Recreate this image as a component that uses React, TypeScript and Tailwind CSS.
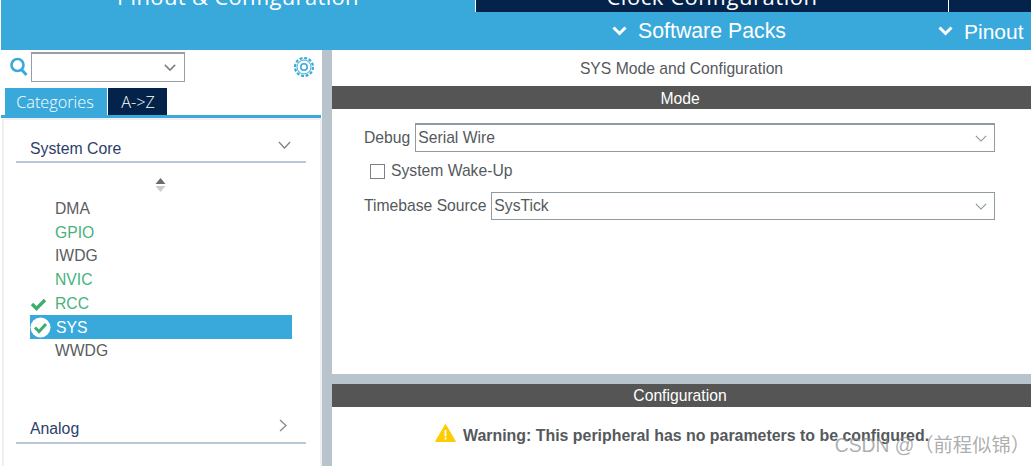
import React from "react";

const Chev = ({ c = "#808080", w = 14, h = 8, s = 1.5 }: { c?: string; w?: number; h?: number; s?: number }) => (
  <svg width={w} height={h} viewBox="0 0 14 8" fill="none" className="shrink-0" preserveAspectRatio="none">
    <path d="M1 1 L7 7 L13 1" stroke={c} strokeWidth={s} />
  </svg>
);

const Sel = ({ text, cls }: { text: string; cls: string }) => (
  <div className={`flex items-center justify-between border border-[#8f9aa1] bg-white pl-[2px] pr-[7px] text-[#55595c] ${cls}`}>
    <span>{text}</span>
    <Chev c="#8a8f92" w={12} h={7} s={1.2} />
  </div>
);

const Item = ({ t, green, mark }: { t: string; green?: boolean; mark?: boolean }) => (
  <div className={`flex h-[23.7px] items-center pl-[25px] text-[15.7px] ${green ? "text-[#47b27a]" : "text-[#5a5c5e]"}`}>
    <div className="flex w-0 -translate-x-[25px]">
      {mark && (
        <svg width="17" height="14" viewBox="0 0 17 14" className="shrink-0">
          <path d="M2 7 L6.5 11.5 L15 3" stroke="#3fae6d" strokeWidth="3.4" fill="none" />
        </svg>
      )}
    </div>
    {t}
  </div>
);

const Head = ({ t, cls }: { t: string; cls: string }) => (
  <div className={`flex h-[23px] items-center justify-center pr-[3px] text-[15.7px] text-white bg-[#545554] ${cls}`}>{t}</div>
);

export default function App() {
  return (
    <div className="flex h-[466px] w-[1031px] flex-col overflow-hidden bg-white font-['Liberation_Sans',sans-serif]">
      <div className="h-[50px] shrink-0 overflow-hidden border-l border-white bg-[#39a9dc]">
        <div className="flex h-[12px] overflow-hidden whitespace-nowrap">
          <div className="flex h-[12px] w-[474px] items-end justify-center text-[22px] leading-[22px] tracking-[0.33px] text-white font-['Open_Sans',sans-serif]">
            <span className="mb-[5px]">Pinout &amp; Configuration</span>
          </div>
          <div className="flex h-[12px] w-[474px] items-end justify-center border-x border-white bg-[#03234b] text-[22px] leading-[22px] tracking-[0.55px] text-white font-['Open_Sans',sans-serif]">
            <span className="mb-[5px]">Clock Configuration</span>
          </div>
          <div className="h-[12px] flex-1 bg-[#03234b]" />
        </div>
        <div className="flex h-[38px] items-center whitespace-nowrap pt-[2px] text-white">
          <div className="ml-[611px] flex w-[175px] shrink-0 items-center gap-[11px] text-[21.3px]">
            <svg width="15" height="10" viewBox="0 0 15 10" className="-mt-[2px] shrink-0" fill="none">
              <path d="M1.5 1.5 L7.5 7.5 L13.5 1.5" stroke="#fff" strokeWidth="3" />
            </svg>
            <span>Software Packs</span>
          </div>
          <div className="ml-[151px] flex items-center gap-[11px] text-[21px]">
            <svg width="15" height="10" viewBox="0 0 15 10" className="-mt-[2px] shrink-0" fill="none">
              <path d="M1.5 1.5 L7.5 7.5 L13.5 1.5" stroke="#fff" strokeWidth="3" />
            </svg>
            <span>Pinout</span>
          </div>
        </div>
      </div>

      <div className="flex min-h-0 flex-1">
        <div className="flex w-[322px] shrink-0 flex-col bg-white">
          <div className="flex h-[38px] shrink-0 items-start pl-[10px] pt-[2px]">
            <svg width="18" height="20" viewBox="0 0 18 20" className="mt-[5px] shrink-0" fill="none">
              <circle cx="7.5" cy="8" r="6" stroke="#39a9dc" strokeWidth="2.6" />
              <path d="M11.5 12.5 L16.5 18" stroke="#39a9dc" strokeWidth="3" />
            </svg>
            <div className="ml-[3px] flex h-[30px] w-[154px] items-center justify-end border border-t-2 border-[#989ea3] pr-[8px]">
              <Chev c="#7c7f82" w={12} h={7} s={1.8} />
            </div>
            <svg width="22" height="22" viewBox="0 0 22 22" className="ml-[108px] mt-[4px] shrink-0" fill="none">
              <circle cx="11" cy="11" r="9" stroke="#39a9dc" strokeWidth="2.2" strokeDasharray="3 1.7" />
              <circle cx="11" cy="11" r="7" stroke="#39a9dc" strokeWidth="1" />
              <circle cx="11" cy="11" r="3.2" stroke="#39a9dc" strokeWidth="1.6" />
            </svg>
          </div>
          <div className="ml-[5px] flex h-[27px] shrink-0 text-[16.3px] font-light text-white font-['Open_Sans',sans-serif]">
            <div className="flex w-[102px] items-center justify-center bg-[#39a9dc] pr-[2px] pt-[1px]">Categories</div>
            <div className="ml-[1px] flex w-[59px] items-center justify-center bg-[#03234b] pl-[1px] pt-[1px]">A-&gt;Z</div>
          </div>
          <div className="ml-[1px] h-[3px] w-[320px] shrink-0 bg-[#39a9dc]" />
          <div className="ml-[2px] flex min-h-0 flex-1 flex-col border-x-[2px] border-t-[2px] border-[#f0f0f0] pl-[12px] pr-[14px]">
            <div className="mt-[14px] flex h-[29px] shrink-0 items-start justify-between border-b-2 border-[#b9c7d6] pl-[14px] pr-[15px] text-[15.8px] leading-[29px] text-[#2c3e6b]">
              <span>System Core</span>
              <div className="pt-[7px]">
                <Chev c="#7c7f82" w={13} h={8} s={1.3} />
              </div>
            </div>
            <div className="flex h-[34px] shrink-0 items-center justify-center pt-[11px]">
              <svg width="11" height="14" viewBox="0 0 11 14" className="-ml-[1px] -mt-[2px]">
                <path d="M5.5 0 L10.5 6 H.5 Z" fill="#6a6d70" />
                <path d="M5.5 14 L10.5 8 H.5 Z" fill="#c9cccf" />
              </svg>
            </div>
            <div className="ml-[14px] w-[262px] shrink-0">
              <Item t="DMA" />
              <Item t="GPIO" green />
              <Item t="IWDG" />
              <Item t="NVIC" green />
              <Item t="RCC" green mark />
              <div className="flex h-[23.7px] items-center bg-[#39a9dc] pl-[26px] text-[15.7px] text-white">
                <div className="flex w-0 -translate-x-[26px]">
                  <svg width="21" height="21" viewBox="0 0 21 21" className="shrink-0">
                    <circle cx="10.5" cy="10.5" r="10" fill="#fff" />
                    <path d="M5 10.5 L9 14.5 L16 7" stroke="#3fae6d" strokeWidth="3" fill="none" />
                  </svg>
                </div>
                SYS
              </div>
              <Item t="WWDG" />
            </div>
            <div className="mt-[51px] flex h-[30px] shrink-0 items-start justify-between border-b-2 border-[#b9c7d6] pl-[14px] pr-[19px] text-[15.8px] leading-[29px] text-[#2c3e6b]">
              <span>Analog</span>
              <svg width="8" height="13" viewBox="0 0 8 13" className="mt-[5px]" fill="none">
                <path d="M1 1 L7 6.5 L1 12" stroke="#8a8d90" strokeWidth="1.4" />
              </svg>
            </div>
          </div>
        </div>

        <div className="w-[10px] shrink-0 bg-[#b8c4cc]" />

        <div className="flex min-w-0 flex-1 flex-col bg-[#b8c4cc]">
          <div className="flex h-[324px] shrink-0 flex-col bg-white">
            <div className="flex h-[36px] shrink-0 items-center justify-center pt-[1px] text-[15.7px] text-[#55595c]">SYS Mode and Configuration</div>
            <Head t="Mode" cls="pt-[2px]" />
            <div className="flex flex-col pl-[32px] pr-[36px] pt-[14px] text-[15.7px] text-[#55595c]">
              <div className="flex h-[29px] items-center gap-[5px]">
                <span>Debug</span>
                <Sel text="Serial Wire" cls="h-[29px] flex-1 border-t-2" />
              </div>
              <div className="mt-[5px] flex h-[28px] items-center pl-[6px]">
                <div className="h-[15px] w-[15px] border border-[#7d8184] bg-white" />
                <span className="ml-[6px]">System Wake-Up</span>
              </div>
              <div className="mt-[7px] flex h-[28px] items-center gap-[5px]">
                <span>Timebase Source</span>
                <Sel text="SysTick" cls="h-[28px] flex-1" />
              </div>
            </div>
          </div>
          <div className="mt-[10px] flex min-h-0 flex-1 flex-col bg-white">
            <Head t="Configuration" cls="pt-0" />
            <div className="relative flex flex-1 items-start pl-[103px] pt-[17px]">
              <svg width="21" height="18" viewBox="0 0 21 18" className="shrink-0">
                <path d="M10.5 0.5 L20.5 17.5 H.5 Z" fill="#ffcc00" stroke="#ffcc00" strokeLinejoin="round" />
                <rect x="9.6" y="6" width="1.8" height="6.5" fill="#fff" />
                <rect x="9.6" y="13.5" width="1.8" height="2" fill="#fff" />
              </svg>
              <span className="ml-[7px] text-[15.92px] font-bold leading-[24px] whitespace-nowrap text-[#55595c]">Warning: This peripheral has no parameters to be configured.</span>
              <div className="absolute right-[1px] top-[26px] whitespace-nowrap font-['Liberation_Sans','Noto_Sans_CJK_SC',sans-serif] text-[19.3px] leading-[26px] text-[#8a8a8a]/70">CSDN @（前程似锦）</div>
            </div>
          </div>
        </div>
      </div>
    </div>
  );
}
